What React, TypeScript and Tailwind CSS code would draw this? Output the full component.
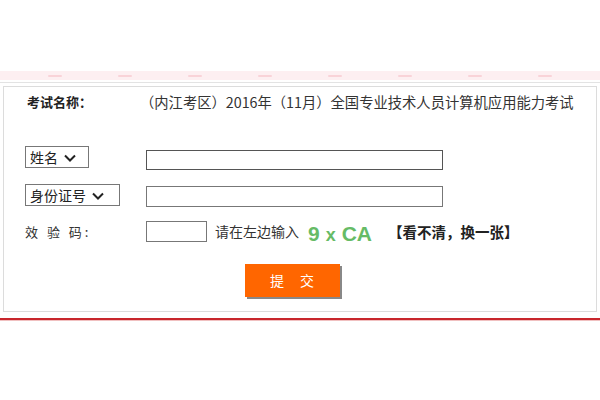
const font = { fontFamily: '"Noto Sans CJK SC", "Noto Sans", sans-serif' }

function Select({ label, width }: { label: string; width: string }) {
  return (
    <div className={`${width} h-[22px] border border-[#777] flex items-center px-[4px] gap-[6px] text-[14px] text-[#222] bg-white`}>
      <span>{label}</span>
      <svg width="12" height="8" viewBox="0 0 12 8" className="mt-[1px]">
        <path d="M1 1.5 L6 6.5 L11 1.5" fill="none" stroke="#222" strokeWidth="2" />
      </svg>
    </div>
  )
}

export default function App() {
  return (
    <div className="w-[600px] h-[400px] bg-white overflow-hidden" style={font}>
      <div className="h-[71px]" />
      {/* pink strip */}
      <div className="h-[9px] bg-[#fdeff1] flex items-center justify-around px-[20px]">
        {[0, 1, 2, 3, 4, 5, 6, 7].map(i => (
          <span key={i} className="w-[14px] h-[2px] bg-[#f9d3d8] rounded" />
        ))}
      </div>
      <div className="h-[1px] bg-[#e3e3e3] mt-[2px]" />

      {/* form box */}
      <div className="mx-[3px] mt-[3px] h-[226px] border border-[#dcdcdc] relative">
        <div className="flex items-center h-[30px] pl-[23px]">
          <span className="w-[113px] text-[13px] font-bold text-[#222]">考试名称：</span>
          <span className="text-[14.3px] text-[#333]">（内江考区）2016年（11月）全国专业技术人员计算机应用能力考试</span>
        </div>

        <div className="flex items-center mt-[27px] pl-[21px]">
          <div className="w-[121px]"><Select label="姓名" width="w-[64px]" /></div>
          <div className="w-[297px] h-[20px] border border-[#555] mt-[6px]" />
        </div>

        <div className="flex items-center mt-[13px] pl-[21px]">
          <div className="w-[121px]"><Select label="身份证号" width="w-[95px]" /></div>
          <div className="w-[297px] h-[21px] border border-[#777] mt-[3px]" />
        </div>

        <div className="flex items-center mt-[12px] pl-[21px]">
          <div className="w-[121px] text-[13px] text-[#333] tracking-[3px]">效 验 码:</div>
          <div className="w-[61px] h-[21px] border border-[#777]" />
          <span className="ml-[8px] text-[14px] text-[#333]">请在左边输入</span>
          <span className="ml-[9px] text-[21px] font-semibold text-[#66bb66] flex items-end gap-[6px] leading-none mt-[4px]" style={{ fontFamily: '"Liberation Sans", sans-serif' }}>
            <span>9</span><span className="text-[18px]">x</span><span>CA</span>
          </span>
          <span className="ml-[16px] text-[14.5px] text-[#222] font-bold">【看不清，换一张】</span>
        </div>

        <div className="flex justify-center mt-[20px] pr-[16px]">
          <button className="w-[95px] h-[33px] bg-[#ff6600] text-white text-[14px] tracking-[16px] pl-[16px] shadow-[2px_2px_0_#888]">
            提交
          </button>
        </div>
      </div>

      <div className="mt-[6px] h-[2px] bg-[#c8262c]" />
      <div className="h-[1px] bg-[#f0c0c0]" />
    </div>
  )
}
